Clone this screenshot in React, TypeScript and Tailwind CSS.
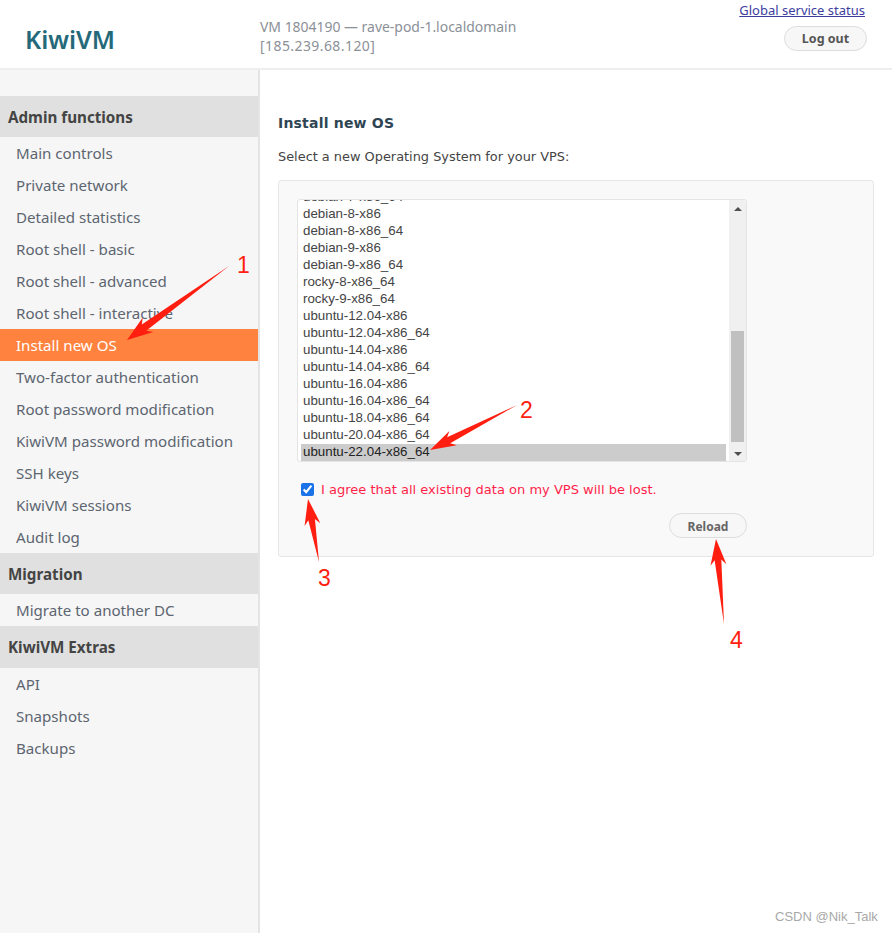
const group1 = ["Main controls","Private network","Detailed statistics","Root shell - basic","Root shell - advanced","Root shell - interactive","Install new OS","Two-factor authentication","Root password modification","KiwiVM password modification","SSH keys","KiwiVM sessions","Audit log"];
const oses = ["debian-7-x86_64","debian-8-x86","debian-8-x86_64","debian-9-x86","debian-9-x86_64","rocky-8-x86_64","rocky-9-x86_64","ubuntu-12.04-x86","ubuntu-12.04-x86_64","ubuntu-14.04-x86","ubuntu-14.04-x86_64","ubuntu-16.04-x86","ubuntu-16.04-x86_64","ubuntu-18.04-x86_64","ubuntu-20.04-x86_64","ubuntu-22.04-x86_64"];

function GroupHead({ label, h }: { label: string; h: string }) {
  return <div className={`${h} flex items-center bg-[#e0e0e0] pl-2 pt-px text-[15.2px] font-bold text-[#444]`}>{label}</div>;
}
function Item({ label, active }: { label: string; active?: boolean }) {
  return <div className={`flex h-8 items-center pl-4 text-[15.1px] ${active ? "bg-[#ff823e] text-white" : "text-[#5c6570]"}`}>{label}</div>;
}

function Arrow({ tip, tail, w }: { tip: [number, number]; tail: [number, number]; w: number }) {
  const dx = tail[0] - tip[0], dy = tail[1] - tip[1];
  const len = Math.hypot(dx, dy);
  const ux = dx / len, uy = dy / len, nx = -uy, ny = ux;
  const b = 26, neck = 21;
  const P = (a: number, n: number) => `${tip[0] + ux * a + nx * n},${tip[1] + uy * a + ny * n}`;
  return <polygon fill="#ff1e0f" points={[P(0, 0), P(b, w), P(neck, w * 0.42), tail.join(","), P(neck, -w * 0.42), P(b, -w)].join(" ")} />;
}

export default function App() {
  return (
    <div className="relative flex h-[933px] w-[892px] flex-col overflow-hidden bg-white font-['Noto_Sans',sans-serif]">
      <header className="flex h-[70px] shrink-0 border-b-2 border-[#eeeeee]">
        <div className="w-[260px] pl-[25px] pt-[21px] text-[25px] font-semibold leading-9 text-[#24697a]">KiwiVM</div>
        <div className="pt-[17px] text-[13.95px] leading-[20px] text-[#8b9097]">
          <div>VM 1804190 — rave-pod-1.localdomain</div>
          <div className="-mt-px tracking-[0.45px]">[185.239.68.120]</div>
        </div>
        <div className="ml-auto flex flex-col items-end pr-[25px] pt-[2px]">
          <a className="mr-[2px] text-[13px] leading-4 text-[#3d3d9e] underline">Global service status</a>
          <button className="mt-[8px] h-[25px] w-[83px] rounded-full border border-[#dddddd] bg-[#f7f7f7] pt-[2px] text-[12.5px] font-bold text-[#555]">Log out</button>
        </div>
      </header>
      <div className="flex min-h-0 flex-1">
        <aside className="w-[260px] shrink-0 border-r-2 border-[#e4e4e4] bg-[#f6f6f6] pt-[26px]">
          <GroupHead label="Admin functions" h="h-[41px]" />
          {group1.map((l) => <Item key={l} label={l} active={l === "Install new OS"} />)}
          <GroupHead label="Migration" h="h-[41px]" />
          <Item label="Migrate to another DC" />
          <GroupHead label="KiwiVM Extras" h="h-[42px]" />
          <Item label="API" />
          <Item label="Snapshots" />
          <Item label="Backups" />
        </aside>
        <main className="flex-1 pl-[18px] pr-[18px] pt-[43px] font-['DejaVu_Sans',sans-serif]">
          <h1 className="text-[14px] font-bold leading-5 tracking-[0.2px] text-[#2f4553]">Install new OS</h1>
          <p className="mt-[14px] text-[12.9px] leading-5 text-[#444]">Select a new Operating System for your VPS:</p>
          <section className="mt-[13px] h-[377px] w-[596px] rounded-[3px] border border-[#e6e6e6] bg-[#f9f9f9] pl-[18px] pt-[18px]">
            <div className="flex h-[263px] w-[450px] overflow-hidden rounded-[3px] border border-[#e4e4e4] bg-white">
              <div className="flex min-w-0 flex-1 flex-col justify-end pl-[3px] pr-[3px] font-['Liberation_Sans',sans-serif] text-[13.33px] leading-[15px] text-[#444]">
                {oses.map((o) => (
                  <div key={o} className={`h-[17px] shrink-0 pl-[2px] ${o === "ubuntu-22.04-x86_64" ? "bg-[#cccccc] text-[#222]" : ""}`}>{o}</div>
                ))}
              </div>
              <div className="flex w-[17px] shrink-0 flex-col items-center bg-[#f0f0f0] pb-[5px] pt-[7px]">
                <svg width="8" height="4" viewBox="0 0 8 4"><path d="M4 0 8 4H0Z" fill="#505050" /></svg>
                <div className="mt-[120px] h-[111px] w-[13px] bg-[#c0c0c0]" />
                <svg className="mt-auto" width="8" height="4" viewBox="0 0 8 4"><path d="M0 0H8L4 4Z" fill="#505050" /></svg>
              </div>
            </div>
            <label className="ml-[4px] mt-[19px] flex items-center">
              <input type="checkbox" defaultChecked className="m-0 size-[13px] accent-[#1a73e8]" />
              <span className="ml-[7px] pt-px text-[13.02px] leading-[16px] text-[#ff1f4b]">I agree that all existing data on my VPS will be lost.</span>
            </label>
            <div className="mt-[15px] flex w-[450px] justify-end">
              <button className="h-[25px] w-[78px] rounded-full border border-[#dddddd] bg-[#f7f7f7] pt-[2px] font-['Noto_Sans',sans-serif] text-[12px] font-bold text-[#666]">Reload</button>
            </div>
          </section>
        </main>
      </div>

      <svg className="pointer-events-none absolute left-0 top-0" width="892" height="933">
        <Arrow tip={[127, 340]} tail={[229, 266]} w={9} />
        <Arrow tip={[430, 450]} tail={[517, 405]} w={8} />
        <Arrow tip={[308, 499]} tail={[319, 562]} w={8} />
        <Arrow tip={[716, 539]} tail={[724, 624]} w={8} />
      </svg>
      <span className="absolute left-[237px] top-[252px] font-['Liberation_Sans',sans-serif] text-[23px] leading-[26px] text-[#ff1e0f]">1</span>
      <span className="absolute left-[520px] top-[397px] font-['Liberation_Sans',sans-serif] text-[23px] leading-[26px] text-[#ff1e0f]">2</span>
      <span className="absolute left-[318px] top-[565px] font-['Liberation_Sans',sans-serif] text-[23px] leading-[26px] text-[#ff1e0f]">3</span>
      <span className="absolute left-[730px] top-[627px] font-['Liberation_Sans',sans-serif] text-[23px] leading-[26px] text-[#ff1e0f]">4</span>
      <span className="absolute left-[775px] top-[909px] font-['Liberation_Sans',sans-serif] text-[13px] leading-4 text-[#a8a8a8]">CSDN @Nik_Talk</span>
    </div>
  );
}
